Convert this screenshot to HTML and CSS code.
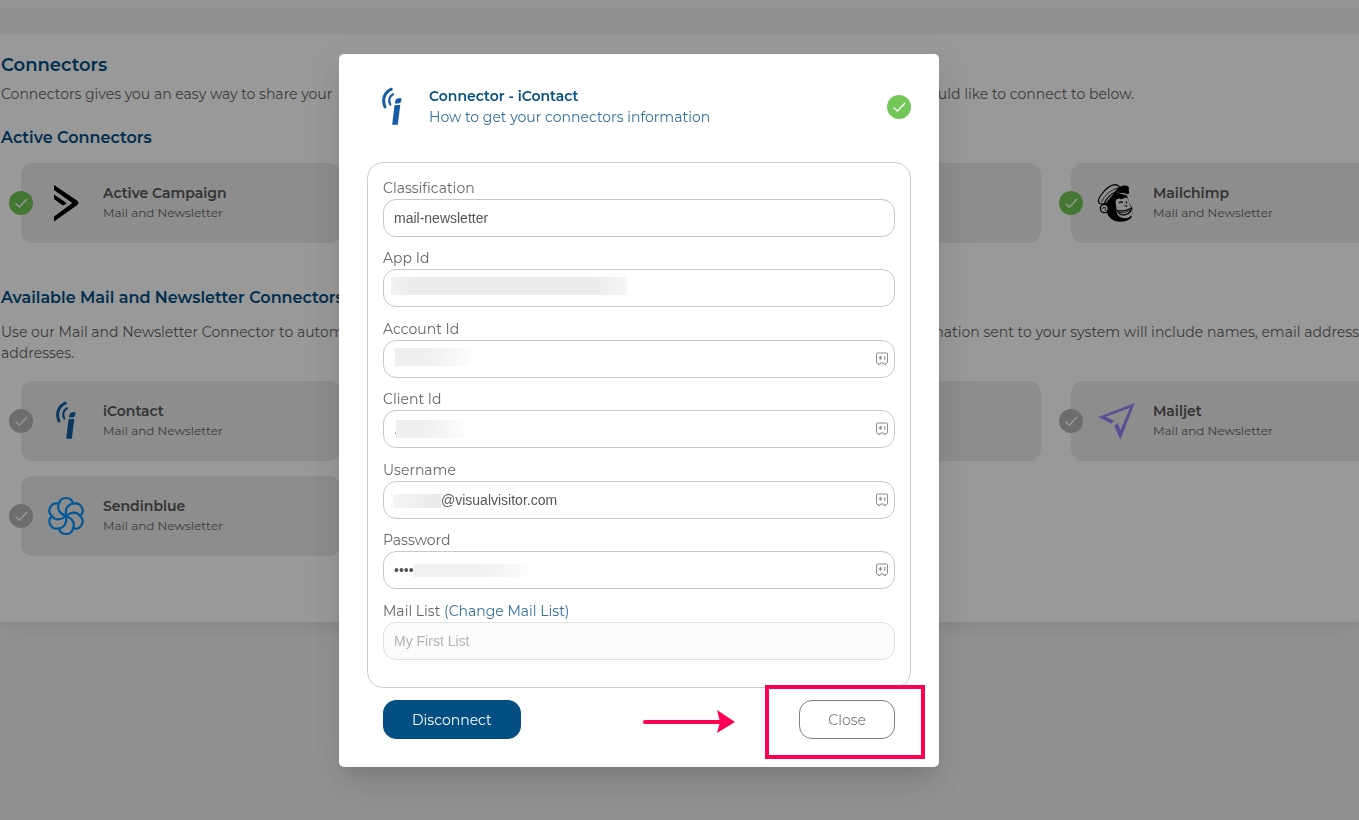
FILE: index.html
```html
<!DOCTYPE html>
<html lang="en">
<head>
<meta charset="utf-8">
<title>Connectors</title>
<link rel="stylesheet" href="styles.css">
</head>
<body>
<svg class="defs" aria-hidden="true">
  <symbol id="check" viewBox="0 0 24 24"><path d="M6.5 12.5l4 3.500 7.500-8" fill="none" stroke="#fff" stroke-width="1.300"/></symbol>
  <symbol id="icontact" viewBox="0 0 40 40">
    <g fill="none" stroke="#145ca4" stroke-linecap="round">
      <path d="M19.3 2.2C13 5 9.500 12 13 20" stroke-width="3"/>
      <path d="M21 7.300C17.500 9 16 13.500 18.300 17.500" stroke-width="2.200"/>
    </g>
    <path d="M23.200 14.500c.2-2 1.500-3.300 3.300-3.300h3l-.3 2.500c-.2 1.700-1.500 2.700-3.200 2.700h-3zM22.500 18.300l5.800-.6-2.500 20h-5.600z" fill="#145ca4"/>
  </symbol>
  <symbol id="campaign" viewBox="0 0 40 40"><path d="M8 2l23 15.600q3 2.400 0 4.700L8 38.500v-5L26.300 20 8 7zM8 11.500l12.800 8.800-2.300 1.600q-1.500.8-3-.3L8 16z"/></symbol>
  <symbol id="mailjet" viewBox="0 0 40 40"><path d="M2.300 16L38.700 2 24.300 38.700l-6-14 3.300-2.700 2.900 7L34 6.700 10 15.800l8 4-2.300 2.900z" fill="#9585fb"/></symbol>
  <symbol id="sendinblue" viewBox="0 0 40 40">
    <g fill="none" stroke="#0092ff" stroke-width="2.200">
      <path d="M20 20C14 18 10.500 13 13 7.500A7.200 7.200 0 0 1 27 7.500"/>
      <path d="M20 20C14 18 10.500 13 13 7.500A7.200 7.200 0 0 1 27 7.500" transform="rotate(60 20 20)"/>
      <path d="M20 20C14 18 10.500 13 13 7.500A7.200 7.200 0 0 1 27 7.500" transform="rotate(120 20 20)"/>
      <path d="M20 20C14 18 10.500 13 13 7.500A7.200 7.200 0 0 1 27 7.500" transform="rotate(180 20 20)"/>
      <path d="M20 20C14 18 10.500 13 13 7.500A7.200 7.200 0 0 1 27 7.500" transform="rotate(240 20 20)"/>
      <path d="M20 20C14 18 10.500 13 13 7.500A7.200 7.200 0 0 1 27 7.500" transform="rotate(300 20 20)"/>
    </g>
  </symbol>
  <symbol id="mailchimp" viewBox="0 0 40 40">
    <path d="M9 21L19 9l12 3.500 2.500 8 3.500 6-1.500 8Q31 39 23.500 38.800 13.500 38 10.500 29z"/>
    <path d="M19.500 18q1-3 4-2.500 2 1.500 5-.5 3-1 4 2l1.500 5.500 3 4.500-1 5.500q-6 4.500-12 1.500-4-2.500-3.500-8.500l-.5-3z" fill="#ebebeb"/>
    <path d="M3.500 20.500Q1 17 5 12 12 2 19.500 1.600q2.500.2 4 2.400L19.500 9Q12 12 8 21z" fill="#ebebeb" stroke="#000" stroke-width="1.200"/>
    <path d="M5.500 19Q10 9 21 5" fill="none" stroke="#000" stroke-width=".7"/>
    <path d="M18.500 10Q20 5.500 24 3.800q3-1.800 7-1 3 1.500 1.500 4 1.500 3-.5 4.500-6-2-13.500-1.300z"/>
    <ellipse cx="8.300" cy="25.500" rx="3.900" ry="4.200" fill="#ebebeb" stroke="#000" stroke-width="1.300"/>
    <path d="M6.500 26q1-3 3-1.300-.5 1.500 0 3" fill="none" stroke="#000" stroke-width=".8"/>
    <path d="M21.500 27.500q7 1.500 14-2.500-.2 5.500-7 6.800-5.500.5-7-4.300zM23 20q2-2 4-.5M30.500 18.500v2M28.500 23h3" fill="none" stroke="#000" stroke-width="1.200"/>
    <path d="M22 29.300q7 1.500 13-2.300" fill="none" stroke="#000" stroke-width=".8"/>
  </symbol>
  <symbol id="vault" viewBox="0 0 14 14">
    <path d="M3.500 11.500h-1a1.500 1.500 0 0 1-1-1.500V2q0-1 1-1h9q1 0 1 1v8a1.500 1.500 0 0 1-1 1.500h-1M3.500 11v1.500H5L5.500 11h3l.5 1.500h1.500V11" fill="none" stroke="#8c8c8c"/>
    <path d="M5.500 3.800v4M3.700 4.800l3.600 2M7.300 4.800l-3.600 2" stroke="#8c8c8c" stroke-width=".9"/>
    <path d="M9.700 4v4" stroke="#aaa" stroke-width="1.500"/>
  </symbol>
</svg>

<main class="page">
  <section class="panel">
    <h1>Connectors</h1>
    <p class="line intro"><span>Connectors gives you an easy way to share your</span><span>would like to connect to below.</span></p>
    <h2>Active Connectors</h2>
    <div class="cards">
      <article class="card"><svg class="badge on"><use href="#check"/></svg><svg class="logo"><use href="#campaign"/></svg><div><h3>Active Campaign</h3><p>Mail and Newsletter</p></div></article>
      <article class="card"></article>
      <article class="card"></article>
      <article class="card"><svg class="badge on"><use href="#check"/></svg><svg class="logo"><use href="#mailchimp"/></svg><div><h3>Mailchimp</h3><p>Mail and Newsletter</p></div></article>
    </div>
    <h2 class="available">Available Mail and Newsletter Connectors</h2>
    <div class="about">
      <p class="line"><span>Use our Mail and Newsletter Connector to automate</span><span>information sent to your system will include names, email address</span></p>
      <p>addresses.</p>
    </div>
    <div class="cards">
      <article class="card"><svg class="badge"><use href="#check"/></svg><svg class="logo"><use href="#icontact"/></svg><div><h3>iContact</h3><p>Mail and Newsletter</p></div></article>
      <article class="card"></article>
      <article class="card"></article>
      <article class="card"><svg class="badge"><use href="#check"/></svg><svg class="logo"><use href="#mailjet"/></svg><div><h3>Mailjet</h3><p>Mail and Newsletter</p></div></article>
      <article class="card"><svg class="badge"><use href="#check"/></svg><svg class="logo"><use href="#sendinblue"/></svg><div><h3>Sendinblue</h3><p>Mail and Newsletter</p></div></article>
    </div>
  </section>
</main>

<div class="backdrop">
  <form class="modal" role="dialog" aria-labelledby="modal-title">
    <header class="modal-head">
      <svg class="logo"><use href="#icontact"/></svg>
      <div class="modal-titles">
        <h2 id="modal-title">Connector - iContact</h2>
        <a href="#">How to get your connectors information</a>
      </div>
      <svg class="status"><use href="#check"/></svg>
    </header>
    <div class="fields">
      <div class="field"><label for="classification">Classification</label><div class="control"><input id="classification" type="text" value="mail-newsletter"></div></div>
      <div class="field"><label for="app">App Id</label><div class="control"><input id="app" type="text"><span class="mask mask-app"></span></div></div>
      <div class="field"><label for="account">Account Id</label><div class="control"><input id="account" type="text"><span class="mask mask-account"></span><svg class="vault"><use href="#vault"/></svg></div></div>
      <div class="field"><label for="client">Client Id</label><div class="control"><input id="client" type="text" value="."><span class="mask mask-client"></span><svg class="vault"><use href="#vault"/></svg></div></div>
      <div class="field"><label for="username">Username</label><div class="control"><input id="username" class="after-mask" type="text" value="@visualvisitor.com"><span class="mask mask-user"></span><svg class="vault"><use href="#vault"/></svg></div></div>
      <div class="field"><label for="password">Password</label><div class="control"><input id="password" type="password" value="1234"><span class="mask mask-password"></span><svg class="vault"><use href="#vault"/></svg></div></div>
      <div class="field"><div class="label-row"><label for="list">Mail List</label> <a href="#">(Change Mail List)</a></div><div class="control"><input id="list" type="text" value="My First List" disabled></div></div>
    </div>
    <footer class="actions">
      <button type="button" class="primary">Disconnect</button>
      <button type="button" class="secondary">Close</button>
    </footer>
    <svg class="arrow" viewBox="0 0 92 24"><path d="M2 12h76" stroke="#fd0054" stroke-width="4" stroke-linecap="round"/><path d="M74 0l18 12-18 11 3-11z" fill="#fd0054"/></svg>
    <span class="highlight"></span>
  </form>
</div>
</body>
</html>
```
FILE: styles.css
```css
* { box-sizing: border-box; }
body {
  margin: 0;
  height: 100vh;
  overflow: hidden;
  background: #f3f3f3;
  color: #666;
  font: 14px/21px Montserrat, Inter, "Open Sans", sans-serif;
}
h1, h2, h3, p { margin: 0; font-weight: 600; }
p { font-weight: 400; }
a { color: #34709f; text-decoration: none; }
.defs { position: absolute; width: 0; height: 0; }

.page { border-top: 7px solid #f9f9f9; padding-top: 27px; }
.panel {
  padding: 18px 0 66px 1px;
  background: #fff;
  box-shadow: 0 8px 16px -2px rgba(0, 0, 0, .08);
}
.panel h1 { color: #034e82; font-size: 18px; line-height: 27px; }
.panel h2 { margin-top: 21px; color: #034e82; font-size: 16px; line-height: 24px; }
.panel h2.available { margin-top: 43px; }
.line { display: flex; justify-content: space-between; white-space: nowrap; }
.intro { margin-top: 5px; max-width: 1133px; }
.about { margin: 12px 0 17px; }
.cards {
  display: grid;
  grid-template-columns: repeat(4, 320px);
  gap: 15px 30px;
  margin-left: 20px;
}
.panel h2 + .cards { margin-top: 13px; }
.card {
  position: relative;
  display: flex;
  align-items: center;
  gap: 17px;
  min-height: 80px;
  padding-left: 25px;
  border-radius: 12px;
  background: #ebebeb;
}
.card h3 { color: #555; font-size: 14px; line-height: 20px; }
.card p { font-size: 12px; line-height: 20px; }
.logo { flex: none; width: 40px; height: 40px; }
.badge, .status { width: 24px; height: 24px; border-radius: 50%; }
.badge { position: absolute; left: -12px; top: 28px; background: #b6b6b6; }
.badge.on, .status { background: #73c658; }

.backdrop {
  position: fixed;
  inset: 0;
  display: flex;
  align-items: center;
  justify-content: center;
  padding-right: 81px;
  background: rgba(0, 0, 0, .4);
}
.modal {
  position: relative;
  width: 600px;
  padding: 32px 28px 28px;
  border-radius: 5px;
  background: #fff;
  box-shadow: 0 11px 15px -7px rgba(0, 0, 0, .12), 0 24px 38px 3px rgba(0, 0, 0, .05), 0 9px 46px 8px rgba(0, 0, 0, .06);
}
.modal-head { display: flex; align-items: center; gap: 17px; padding-left: 5px; margin-bottom: 34px; }
.modal-titles { flex: 1; }
.modal-titles h2 { color: #034e82; font-size: 14px; line-height: 21px; }
.modal-titles a { display: block; }
.fields {
  display: flex;
  flex-direction: column;
  justify-content: space-between;
  min-height: 526px;
  padding: 15px 15px 27px;
  border: 1px solid #ccc;
  border-radius: 16px;
}
.field label, .label-row { display: block; line-height: 21px; }
.label-row label { display: inline; }
.control { position: relative; }
.control input {
  display: block;
  width: 100%;
  height: 38px;
  padding: 0 30px 0 10px;
  border: 1px solid #c8c8c8;
  border-radius: 13px;
  background: #fff;
  color: #555;
  font: 14px "Liberation Sans", Arial, sans-serif;
}
.control input.after-mask { padding-left: 57px; }
.control input:disabled { background: #fcfcfc; border-color: #e0e0e0; color: #b3b3b3; }
.mask { position: absolute; left: 12px; top: 8px; height: 18px; background: linear-gradient(90deg, #efefef 40%, #fcfcfc); }
.mask-app { left: 8px; width: 236px; background: linear-gradient(90deg, #f3f3f3, #ececec 10%, #ececec 85%, #f5f5f5); }
.mask-account { width: 76px; }
.mask-client { left: 13px; top: 10px; width: 68px; }
.mask-user { left: 10px; top: 13px; width: 48px; height: 14px; background: linear-gradient(90deg, #f5f5f5, #e9e9e9); }
.mask-password { left: 30px; top: 13px; width: 116px; height: 13px; background: linear-gradient(90deg, #f1f1f1 60%, #fcfcfc); }
.vault { position: absolute; right: 6px; top: 12px; width: 14px; height: 14px; }
.actions { display: flex; justify-content: space-between; margin-top: 12px; padding: 0 16px; }
.actions button {
  height: 39px;
  padding: 1px 28px 0;
  border: 1px solid #808080;
  border-radius: 13px;
  background: #fff;
  color: #808080;
  font: 14px Montserrat, Inter, "Open Sans", sans-serif;
}
.actions button.primary { border-color: #034e82; background: #034e82; color: #fff; }
.arrow { position: absolute; left: 304px; bottom: 33px; width: 92px; height: 24px; }
.highlight { position: absolute; right: 14px; bottom: 8px; width: 160px; height: 74px; border: 4px solid #fd0054; pointer-events: none; }
```
